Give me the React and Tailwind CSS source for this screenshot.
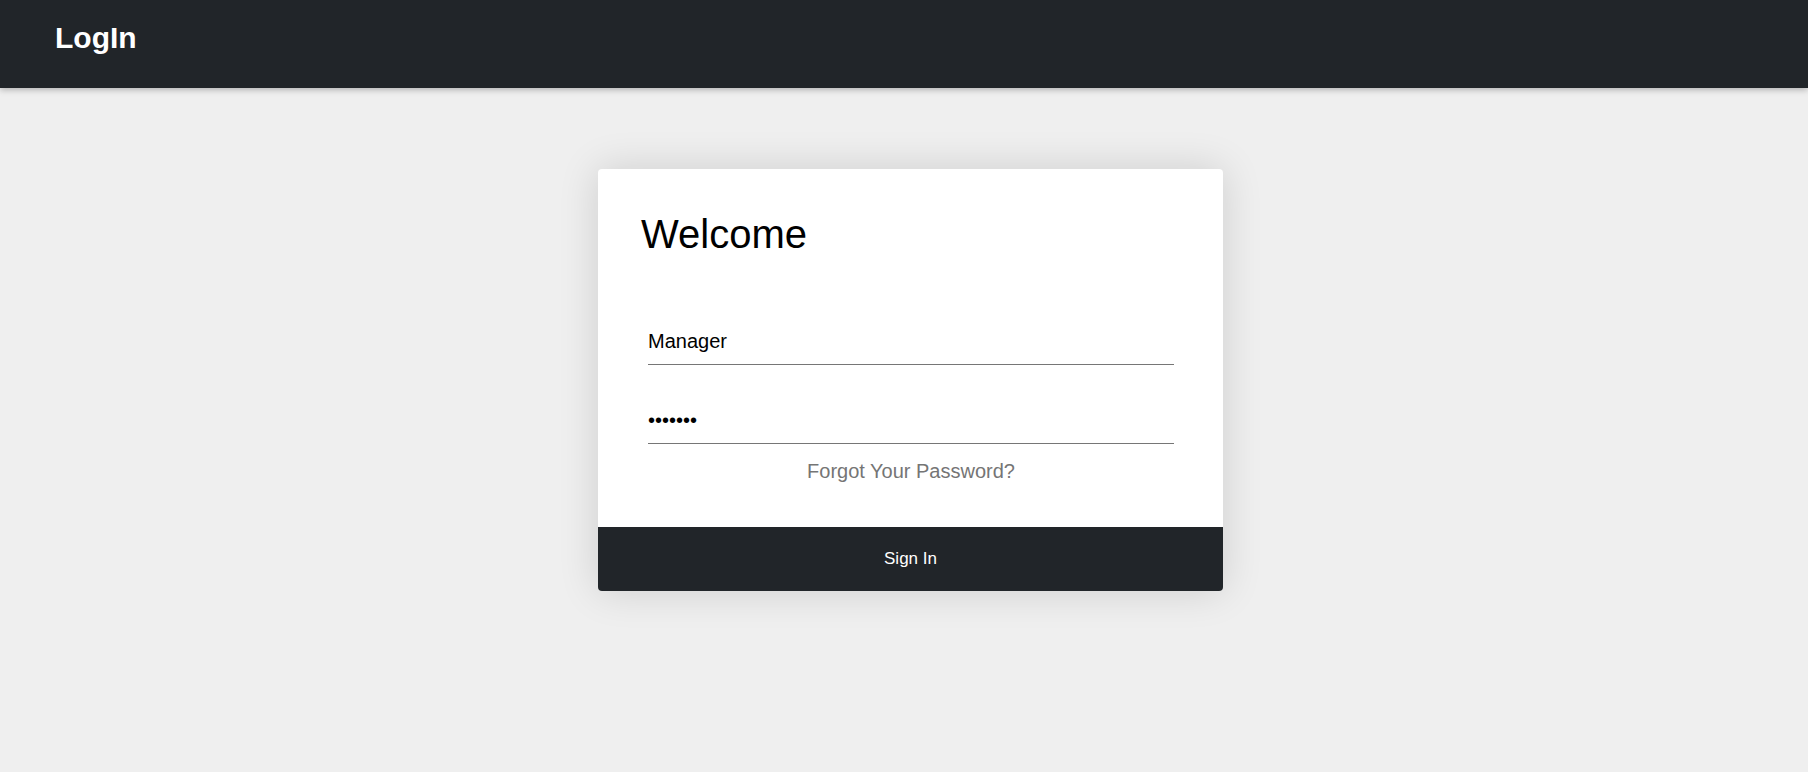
import { useState } from "react";

function App() {
  const [username, setUsername] = useState("Manager");
  const [password, setPassword] = useState("1234567");

  return (
    <div className="min-h-screen bg-[#efefef] font-['Liberation_Sans',Arial,sans-serif]">
      <header className="h-[88px] bg-[#212529] pl-[55px] pt-[21px] shadow-[0_2px_6px_rgba(0,0,0,0.25)]">
        <h1 className="text-[30px] font-bold leading-[34px] text-white">LogIn</h1>
      </header>

      <div className="flex justify-center pl-[13px] pt-[81px]">
        <div className="w-[625px] overflow-hidden rounded-[4px] bg-white shadow-[0_0_40px_rgba(0,0,0,0.14)]">
          <div className="pl-[43px] pr-[42px] pt-[42px] pb-[44px]">
            <h2 className="text-[40px] leading-[46px] text-black">Welcome</h2>

            <div className="px-[7px]">
              <input
                type="text"
                value={username}
                onChange={(e) => setUsername(e.target.value)}
                className="mt-[63px] block w-full border-b border-[#767676] pt-[10px] pb-[11px] text-[20px] leading-[23px] text-black outline-none"
              />
              <input
                type="password"
                value={password}
                onChange={(e) => setPassword(e.target.value)}
                className="mt-[34px] block w-full border-b border-[#767676] pt-[10px] pb-[11px] text-[20px] leading-[23px] text-black outline-none"
              />
              <p className="mt-[16px] text-center text-[20px] leading-[23px] text-[#757575]">
                Forgot Your Password?
              </p>
            </div>
          </div>

          <button className="flex h-[64px] w-full items-center justify-center bg-[#212529] text-[17px] text-white">
            Sign In
          </button>
        </div>
      </div>
    </div>
  );
}

export default App;
